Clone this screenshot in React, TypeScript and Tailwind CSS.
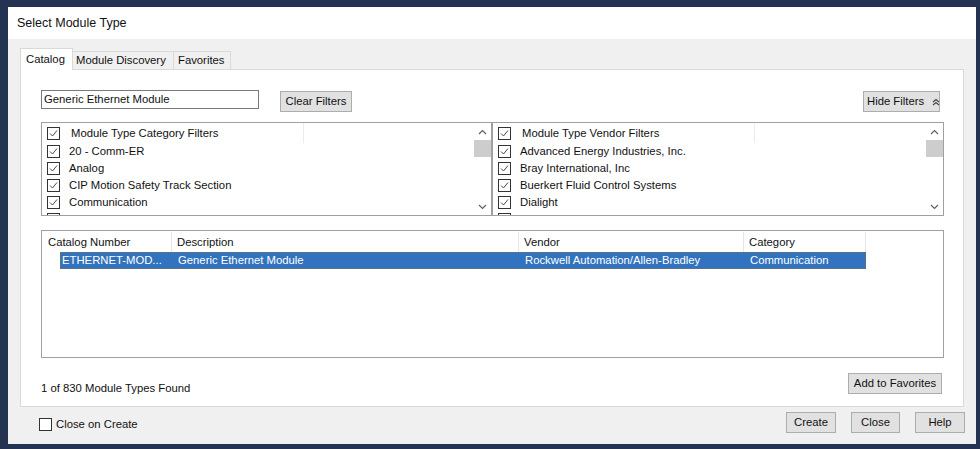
import React from "react";

function Check({ checked = true }: { checked?: boolean }) {
  return (
    <span className="w-[13px] h-[13px] border border-[#333333] bg-white flex items-center justify-center shrink-0">
      {checked && (
        <svg width="9" height="9" viewBox="0 0 9 9">
          <polyline points="1,4.5 3.5,7 8,1.5" fill="none" stroke="#4a4a4a" strokeWidth="1" />
        </svg>
      )}
    </span>
  );
}

function Chevron({ up }: { up: boolean }) {
  return (
    <svg width="9" height="6" viewBox="0 0 9 6">
      <polyline
        points={up ? "1,5 4.5,1.5 8,5" : "1,1 4.5,4.5 8,1"}
        fill="none"
        stroke="#606060"
        strokeWidth="1.2"
      />
    </svg>
  );
}

function Scrollbar() {
  return (
    <div className="w-[17px] shrink-0 flex flex-col bg-white">
      <div className="h-[17px] flex items-center justify-center">
        <Chevron up />
      </div>
      <div className="flex-1 flex flex-col">
        <div className="h-[17px] bg-[#cdcdcd]" />
      </div>
      <div className="h-[17px] flex items-center justify-center">
        <Chevron up={false} />
      </div>
    </div>
  );
}

function FilterBox({ title, items, cls }: { title: string; items: string[]; cls: string }) {
  return (
    <div className={"flex border border-[#a0a0a0] h-[94px] bg-white overflow-hidden " + cls}>
      <div className="flex-1 flex flex-col overflow-hidden">
        <div className="h-[20px] shrink-0 flex">
          <div className="w-[262px] flex items-center pl-[5px] border-r border-[#ececec]">
            <Check />
            <span className="ml-[11px] whitespace-nowrap">{title}</span>
          </div>
        </div>
        {items.map((t) => (
          <div key={t} className="h-[17px] shrink-0 flex items-center pl-[5px]">
            <Check />
            <span className="ml-[9px] whitespace-nowrap">{t}</span>
          </div>
        ))}
      </div>
      <Scrollbar />
    </div>
  );
}

function Btn({ children, cls = "" }: { children: React.ReactNode; cls?: string }) {
  return (
    <div
      className={
        "h-[21px] bg-[#e1e1e1] border border-[#adadad] flex items-center justify-center shrink-0 whitespace-nowrap " +
        cls
      }
    >
      {children}
    </div>
  );
}

export default function App() {
  return (
    <div className="w-[980px] h-[449px] bg-[#253352] pl-[8px] pt-[7px] overflow-hidden font-['Liberation_Sans',Arial,sans-serif] text-[11.3px] text-[#111111]">
      <div className="w-[968px] h-[437px] bg-[#f0f0f0] flex flex-col">
        <div className="h-[32px] bg-white pl-[9px] pt-[1px] flex items-center text-[12.5px] shrink-0">
          Select Module Type
        </div>
        <div className="px-[12px] pt-[9px]">
          <div className="h-[21px] flex items-end relative z-10">
            <div className="h-[22px] w-[53px] bg-white border border-b-0 border-[#d9d9d9] flex items-center pl-[5px] -mb-px">
              Catalog
            </div>
            <div className="h-[18px] w-[101px] bg-[#f0f0f0] border border-b-0 border-l-0 border-[#d9d9d9] flex items-center pl-[3px] whitespace-nowrap">
              Module Discovery
            </div>
            <div className="h-[18px] w-[57px] bg-[#f0f0f0] border border-b-0 border-l-0 border-[#d9d9d9] flex items-center pl-[4px]">
              Favorites
            </div>
          </div>
          <div className="h-[338px] border border-[#d9d9d9] bg-white pt-[20px] pl-[20px] pr-[19px] flex flex-col">
            <div className="flex items-start h-[22px]">
              <div className="w-[218px] h-[19px] border border-[#7a7a7a] flex items-center pl-[2px] whitespace-nowrap">
                Generic Ethernet Module
              </div>
              <Btn cls="ml-[21px] mt-[1px] w-[72px]">Clear Filters</Btn>
              <div className="flex-1" />
              <Btn cls="mt-[1px] mr-[4px] w-[77px] justify-start pl-[3px]">
                <span>Hide Filters</span>
                <svg width="8" height="8" viewBox="0 0 8 8" className="ml-[8px] shrink-0">
                  <polyline points="1,4 4,1.5 7,4" fill="none" stroke="#444" strokeWidth="1.1" />
                  <polyline points="1,7 4,4.5 7,7" fill="none" stroke="#444" strokeWidth="1.1" />
                </svg>
              </Btn>
            </div>
            <div className="flex mt-[10px]">
              <FilterBox
                cls="w-[451px]"
                title="Module Type Category Filters"
                items={["20 - Comm-ER", "Analog", "CIP Motion Safety Track Section", "Communication", "Communication Adapter"]}
              />
              <FilterBox
                cls="flex-1"
                title="Module Type Vendor Filters"
                items={[
                  "Advanced Energy Industries, Inc.",
                  "Bray International, Inc",
                  "Buerkert Fluid Control Systems",
                  "Dialight",
                  "Endress+Hauser",
                ]}
              />
            </div>
            <div className="mt-[14px] h-[128px] border border-[#a0a0a0] bg-white pt-[1px] flex flex-col">
              <div className="h-[20px] flex shrink-0">
                <div className="w-[130px] pl-[6px] flex items-center border-r border-[#e5e5e5]">Catalog Number</div>
                <div className="w-[347px] pl-[5px] flex items-center border-r border-[#e5e5e5]">Description</div>
                <div className="w-[225px] pl-[5px] flex items-center border-r border-[#e5e5e5]">Vendor</div>
                <div className="w-[122px] pl-[5px] flex items-center border-r border-[#e5e5e5]">Category</div>
              </div>
              <div className="pl-[18px] flex">
                <div className="h-[17px] w-[806px] bg-[#3173be] text-white flex border border-dotted border-[#8a6a55]">
                  <div className="w-[112px] pl-[1px] flex items-center whitespace-nowrap">ETHERNET-MOD...</div>
                  <div className="w-[347px] pl-[5px] flex items-center">Generic Ethernet Module</div>
                  <div className="w-[225px] pl-[5px] flex items-center">Rockwell Automation/Allen-Bradley</div>
                  <div className="flex-1 pl-[5px] flex items-center">Communication</div>
                </div>
              </div>
            </div>
            <div className="mt-[15px] flex items-start justify-between pr-[2px]">
              <span className="leading-[14px] mt-[8px]">1 of 830 Module Types Found</span>
              <Btn cls="w-[94px]">Add to Favorites</Btn>
            </div>
          </div>
        </div>
        <div className="flex items-start pt-[5px] pl-[31px] pr-[11px]">
          <div className="mt-[4px] flex items-center">
            <Check checked={false} />
            <span className="ml-[4px]">Close on Create</span>
          </div>
          <div className="flex-1" />
          <Btn cls="w-[50px]">Create</Btn>
          <Btn cls="w-[49px] ml-[15px]">Close</Btn>
          <Btn cls="w-[50px] ml-[15px]">Help</Btn>
        </div>
      </div>
    </div>
  );
}
